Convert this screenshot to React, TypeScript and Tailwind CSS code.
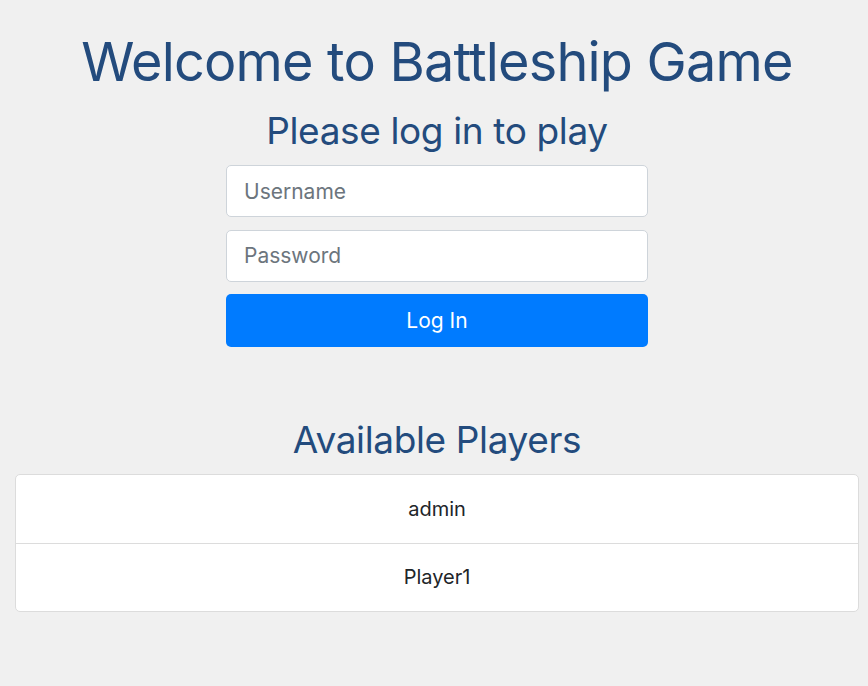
export default function App() {
    const players = ['admin', 'Player1'];

    return (
        <div className="min-h-[686px] bg-[#f0f0f0] font-['Inter',sans-serif] pl-[15px] pr-[9px] pt-[30px]">
            <div className="flex flex-col items-center">
                <h1 className="text-[54px] leading-[1.2] font-normal text-[#234b7d] tracking-[-0.015em]">
                    Welcome to Battleship Game
                </h1>
                <h2 className="text-[37px] leading-[1.2] font-normal text-[#234b7d] mt-[14px] tracking-[-0.01em]">
                    Please log in to play
                </h2>

                {/* Login form */}
                <form className="w-[422px] flex flex-col gap-[12.5px] mt-[12px]" onSubmit={(e) => e.preventDefault()}>
                    <input
                        type="text"
                        placeholder="Username"
                        className="h-[52px] w-full bg-white border border-[#ced4da] rounded-[5px] px-[17px] text-[21px] text-[#495057] placeholder:text-[#6c757d] outline-none"
                    />
                    <input
                        type="password"
                        placeholder="Password"
                        className="h-[52px] w-full bg-white border border-[#ced4da] rounded-[5px] px-[17px] text-[21px] text-[#495057] placeholder:text-[#6c757d] outline-none"
                    />
                    <button
                        type="submit"
                        className="h-[53px] w-full bg-[#007bff] text-white text-[21px] rounded-[5px]"
                    >
                        Log In
                    </button>
                </form>

                <h2 className="text-[37px] leading-[1.2] font-normal text-[#234b7d] mt-[71px] tracking-[-0.01em]">
                    Available Players
                </h2>
            </div>

            {/* Players list */}
            <ul className="mt-[11px] bg-white border border-[#dcdcdc] rounded-[5px]">
                {players.map((p, i) => (
                    <li
                        key={p}
                        className={`h-[68px] flex items-center justify-center text-[20px] text-[#212529] ${i > 0 ? 'border-t border-[#dcdcdc]' : ''}`}
                    >
                        {p}
                    </li>
                ))}
            </ul>
        </div>
    );
}
